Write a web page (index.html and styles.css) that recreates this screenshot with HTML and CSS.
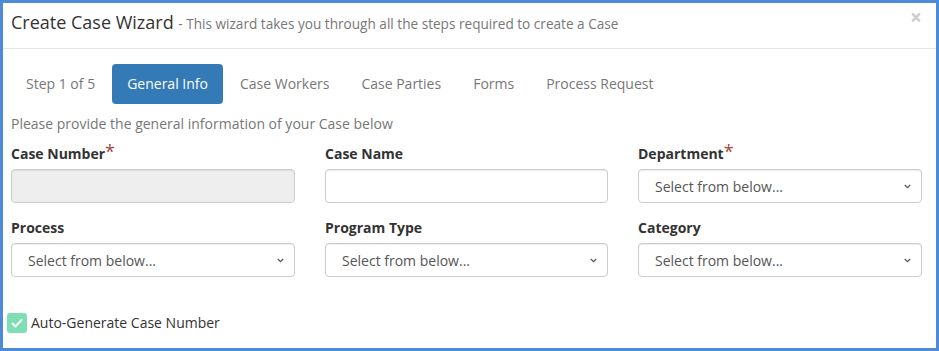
FILE: index.html
```html
<!DOCTYPE html>
<html>
<head>
<meta charset="utf-8">
<link rel="stylesheet" href="styles.css">
</head>
<body>
<div class="modal">
  <div class="modal-header">
    <h4 class="title">Create Case Wizard <small class="subtitle">- This wizard takes you through all the steps required to create a Case</small></h4>
    <span class="close">&times;</span>
  </div>
  <div class="modal-body">
    <ul class="pills">
      <li class="pill">Step 1 of 5</li>
      <li class="pill active">General Info</li>
      <li class="pill">Case Workers</li>
      <li class="pill">Case Parties</li>
      <li class="pill">Forms</li>
      <li class="pill">Process Request</li>
    </ul>
    <p class="intro">Please provide the general information of your Case below</p>
    <div class="grid">
      <div class="field">
        <label class="label">Case Number<span class="req">*</span></label>
        <div class="control disabled"></div>
      </div>
      <div class="field">
        <label class="label">Case Name</label>
        <div class="control"></div>
      </div>
      <div class="field">
        <label class="label">Department<span class="req">*</span></label>
        <div class="control select">Select from below...<svg class="chev" width="7" height="5" viewBox="0 0 7 5"><path d="M0.8 1l2.7 2.7L6.2 1" fill="none" stroke="#555" stroke-width="1.2"/></svg></div>
      </div>
      <div class="field">
        <label class="label">Process</label>
        <div class="control select">Select from below...<svg class="chev" width="7" height="5" viewBox="0 0 7 5"><path d="M0.8 1l2.7 2.7L6.2 1" fill="none" stroke="#555" stroke-width="1.2"/></svg></div>
      </div>
      <div class="field">
        <label class="label">Program Type</label>
        <div class="control select">Select from below...<svg class="chev" width="7" height="5" viewBox="0 0 7 5"><path d="M0.8 1l2.7 2.7L6.2 1" fill="none" stroke="#555" stroke-width="1.2"/></svg></div>
      </div>
      <div class="field">
        <label class="label">Category</label>
        <div class="control select">Select from below...<svg class="chev" width="7" height="5" viewBox="0 0 7 5"><path d="M0.8 1l2.7 2.7L6.2 1" fill="none" stroke="#555" stroke-width="1.2"/></svg></div>
      </div>
    </div>
    <div class="check-row">
      <span class="checkbox"><svg width="20" height="20" viewBox="0 0 20 20"><path d="M5.5 10.5l3 3 6-6.5" fill="none" stroke="#fff" stroke-width="2" stroke-linecap="round" stroke-linejoin="round"/></svg></span>
      <span class="check-label">Auto-Generate Case Number</span>
    </div>
  </div>
</div>
</body>
</html>
```

FILE: styles.css
```css
* { box-sizing: border-box; }
html, body { margin: 0; padding: 0; background: #fff; }
body { font-family: "Open Sans", "Liberation Sans", sans-serif; font-size: 14px; color: #333; }
.modal {
  width: 939px;
  height: 351px;
  border: 3px solid #4d8bd7;
  background: #fff;
  overflow: hidden;
}
.modal-header {
  height: 46px;
  border-bottom: 1px solid #e5e5e5;
  display: flex;
  align-items: flex-start;
  justify-content: space-between;
  padding: 7px 14px 0 8px;
}
.title {
  margin: 0;
  font-size: 18px;
  font-weight: 400;
  line-height: 24px;
  color: #333;
}
.subtitle { font-size: 13.6px; color: #777; }
.close {
  font-size: 21px;
  font-weight: 700;
  line-height: 18px;
  color: #000;
  opacity: 0.2;
  margin-top: -2px;
}
.modal-body { padding: 15px 14px 0 8px; }
.pills {
  list-style: none;
  margin: 0;
  padding: 0;
  display: flex;
}
.pill {
  padding: 10px 15px;
  line-height: 20px;
  color: #777;
  border-radius: 4px;
  margin-right: 2px;
}
.pill.active { background: #337ab7; color: #fff; }
.intro { margin: 10px 0 10px; line-height: 20px; color: #777; }
.grid {
  display: grid;
  grid-template-columns: 284px 283px 284px;
  column-gap: 30px;
  row-gap: 15px;
}
.label {
  display: block;
  font-weight: 700;
  line-height: 20px;
  margin-bottom: 5px;
  color: #333;
}
.req { color: #a94442; font-size: 18px; vertical-align: top; line-height: 14px; font-weight: 400; }
.control {
  height: 34px;
  border: 1px solid #ccc;
  border-radius: 4px;
  background: #fff;
  box-shadow: inset 0 1px 1px rgba(0,0,0,0.075);
  display: flex;
  align-items: center;
  padding: 0 10px 0 16px;
  color: #555;
  font-size: 14px;
}
.control.disabled { background: #eee; }
.select { justify-content: space-between; }
.chev { display: block; }
.check-row {
  display: flex;
  align-items: center;
  margin: 36px 0 0 -4px;
  gap: 4px;
}
.checkbox {
  width: 20px;
  height: 20px;
  border-radius: 3px;
  background: #7ddfb3;
  display: block;
}
.checkbox svg { display: block; }
.check-label { color: #333; line-height: 20px; }
```
